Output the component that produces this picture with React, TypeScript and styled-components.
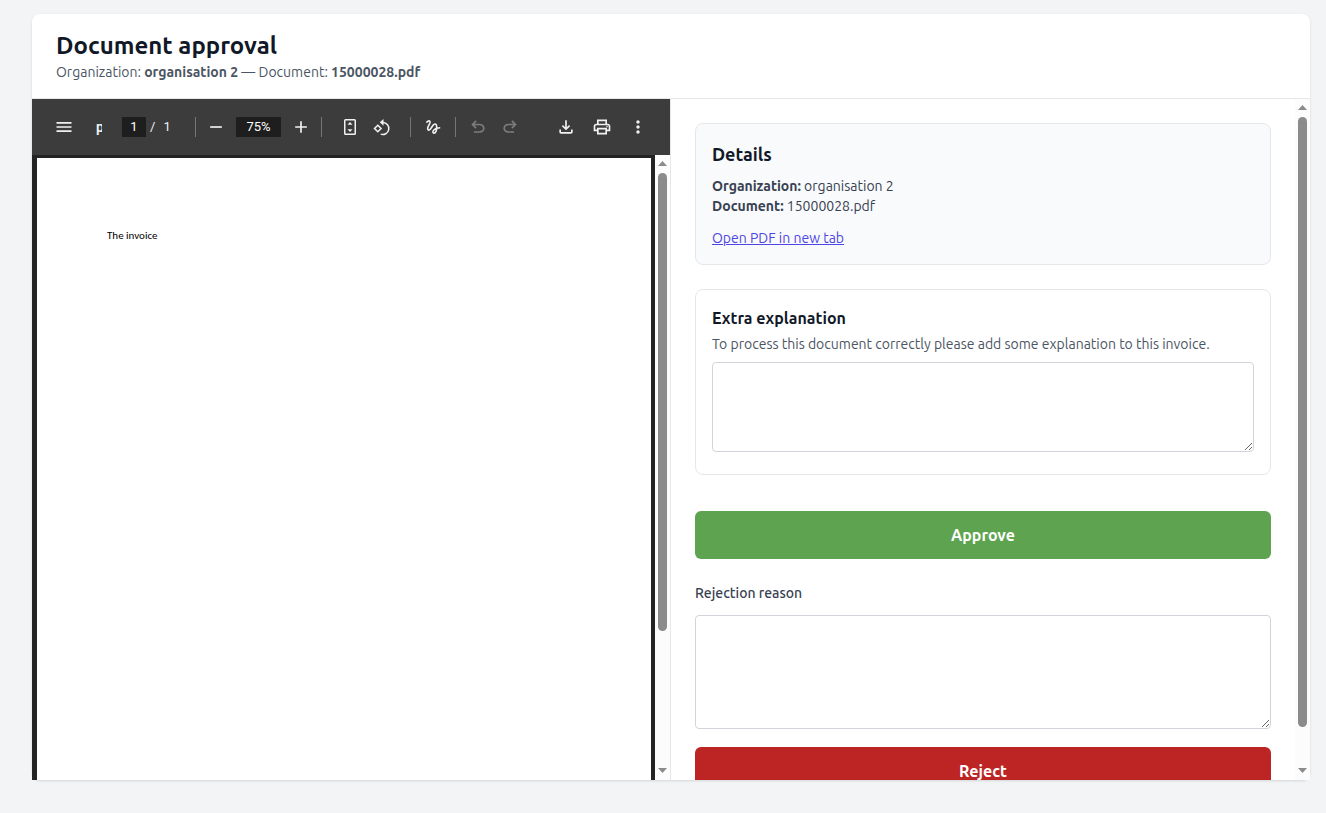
import React from 'react';
import styled, { createGlobalStyle, css } from 'styled-components';
import {
  MdAdd,
  MdMenu,
  MdMoreVert,
  MdOutlineFileDownload,
  MdOutlineLocalPrintshop,
  MdRemove,
} from 'react-icons/md';

const GlobalStyle = createGlobalStyle`
  *, *::before, *::after { box-sizing: border-box; }
  body {
    margin: 0;
    background: #f3f4f6;
    color: #111827;
    font-family: Ubuntu, "Noto Sans", sans-serif;
    font-size: 14px;
    line-height: 20px;
  }
  h1, h2, h3, p { margin: 0; }
`;

const Page = styled.div`
  display: flex;
  height: 100vh;
  padding: 14px 16px 33px 32px;
`;

const Card = styled.main`
  flex: 1;
  min-width: 0;
  display: flex;
  flex-direction: column;
  background: #fff;
  border-radius: 8px;
  box-shadow: 0 1px 3px rgba(0, 0, 0, 0.1), 0 1px 2px -1px rgba(0, 0, 0, 0.1);
`;

const Header = styled.header`
  padding: 16px 24px;
  border-bottom: 1px solid #e5e7eb;
`;

const Title = styled.h1`
  font-size: 24px;
  line-height: 32px;
  font-weight: 700;
`;

const Subtitle = styled.p`
  color: #4b5563;
  strong { font-weight: 700; }
`;

const Columns = styled.div`
  flex: 1;
  min-height: 0;
  display: grid;
  grid-template-columns: 1fr 1fr;
`;

const Viewer = styled.section`
  display: flex;
  flex-direction: column;
  min-width: 0;
  min-height: 0;
  border-right: 1px solid #e5e7eb;
  font-family: Roboto, sans-serif;
`;

const Toolbar = styled.div`
  display: flex;
  align-items: center;
  flex: none;
  height: 56px;
  padding: 0 16px;
  background: #3c3c3c;
  color: #f1f1f1;
`;

const ToolGroup = styled.div<{ $gap?: number; $push?: boolean }>`
  display: flex;
  align-items: center;
  gap: ${(p) => p.$gap ?? 0}px;
  ${(p) => p.$push && css`margin-left: auto;`}
`;

const ToolButton = styled.button`
  display: flex;
  align-items: center;
  justify-content: center;
  width: 32px;
  height: 32px;
  padding: 0;
  border: 0;
  border-radius: 50%;
  background: none;
  color: #f1f1f1;
  svg { width: 20px; height: 20px; fill: currentColor; }
  &:disabled { color: #7c7c7c; }
`;

const Divider = styled.span<{ $before: number; $after: number }>`
  width: 1px;
  height: 20px;
  margin: 0 ${(p) => p.$after}px 0 ${(p) => p.$before}px;
  background: #767676;
`;

const FileName = styled.span`
  width: 6px;
  margin: 0 20px 0 16px;
  overflow: hidden;
  white-space: nowrap;
  font-weight: 600;
`;

const ToolInput = styled.input<{ $width: number }>`
  width: ${(p) => p.$width}px;
  height: 20px;
  padding: 0;
  border: 0;
  background: #1e1e1e;
  color: #fff;
  font: 13px/20px Roboto, sans-serif;
  text-align: center;
`;

const PageTotal = styled.span`
  display: flex;
  gap: 8px;
  width: 21px;
  margin-left: 4px;
  font-size: 13px;
`;

const Scroller = styled.div`
  flex: 1;
  min-height: 0;
  display: flex;
`;

const Canvas = styled.div`
  flex: 1;
  min-width: 0;
  display: flex;
  padding: 3px 4px 0 5px;
  background: #232323;
`;

const Sheet = styled.div`
  flex: 1;
  padding: 70px;
  background: #fff;
  color: #000;
  font-family: Carlito, Lato, sans-serif;
  font-size: 11px;
  line-height: 16px;
`;

const Track = styled.div`
  flex: none;
  width: 15px;
  display: flex;
  flex-direction: column;
  align-items: center;
  background: #fcfcfc;
`;

const TrackBody = styled.div`
  flex: 1;
  width: 9px;
`;

const Thumb = styled.div<{ $size: number }>`
  height: ${(p) => p.$size}%;
  border-radius: 5px;
  background: #8b8b8b;
`;

const Arrow = styled.svg`
  flex: none;
  width: 9px;
  height: 18px;
  fill: #8b8b8b;
`;

const Pane = styled.section`
  flex: 1;
  min-width: 0;
  padding: 24px;
  overflow: hidden;
`;

const Panel = styled.section<{ $tinted?: boolean }>`
  margin-bottom: 24px;
  padding: 16px;
  border: 1px solid #e5e7eb;
  border-radius: 8px;
  background: ${(p) => (p.$tinted ? '#f9fafb' : '#fff')};
`;

const PanelTitle = styled.h2`
  margin-bottom: 8px;
  font-size: 18px;
  line-height: 28px;
  font-weight: 700;
`;

const PanelSubtitle = styled.h3`
  margin-bottom: 4px;
  font-size: 16px;
  line-height: 24px;
  font-weight: 700;
`;

const Line = styled.p`
  color: #374151;
  strong { font-weight: 700; }
`;

const PdfLink = styled.a`
  display: inline-block;
  margin-top: 12px;
  color: #4f46e5;
  text-decoration: underline;
`;

const Hint = styled.label`
  display: block;
  margin-bottom: 8px;
  color: #4b5563;
`;

const TextArea = styled.textarea<{ $height: number }>`
  display: block;
  width: 100%;
  height: ${(p) => p.$height}px;
  margin-bottom: 6px;
  padding: 8px;
  border: 1px solid #d1d5db;
  border-radius: 4px;
  background: #fff;
  font: inherit;
  resize: vertical;
`;

const FieldLabel = styled.label`
  display: block;
  margin: 24px 0 12px;
  color: #374151;
  font-weight: 500;
`;

const ActionButton = styled.button<{ $tone: 'approve' | 'reject' }>`
  display: block;
  width: 100%;
  height: 48px;
  margin-top: ${(p) => (p.$tone === 'approve' ? 36 : 18)}px;
  padding: 0;
  border: 0;
  border-radius: 6px;
  background: ${(p) => (p.$tone === 'approve' ? '#5ea34f' : '#bd2424')};
  color: #fff;
  font-family: inherit;
  font-size: 16px;
  line-height: 24px;
  font-weight: 700;
`;

const UndoIcon = ({ flip }: { flip?: boolean }) => (
  <svg viewBox="0 -960 960 960" aria-hidden="true">
    <path
      transform={flip ? 'translate(960 0) scale(-1 1)' : undefined}
      d="M280-200v-80h284q63 0 109.500-40T720-420q0-60-46.500-100T564-560H312l104 104-56 56-200-200 200-200 56 56-104 104h252q97 0 166.500 63T800-420q0 94-69.500 157T564-200H280Z"
    />
  </svg>
);

const FitPageIcon = () => (
  <svg viewBox="0 0 20 20" aria-hidden="true">
    <path
      fillRule="evenodd"
      d="M5.500 2h9A1.500 1.500 0 0 1 16 3.500v13a1.500 1.500 0 0 1-1.500 1.500h-9A1.500 1.500 0 0 1 4 16.500v-13A1.500 1.500 0 0 1 5.500 2zm0 1.500v13h9v-13zM10 5l2.500 2.700h-5zM10 15l2.500-2.700h-5z"
    />
  </svg>
);

const RotateIcon = () => (
  <svg viewBox="0 0 20 20" aria-hidden="true">
    <g fill="none" stroke="currentColor" strokeWidth="1.500">
      <path d="M5.800 8.200 9.100 11.500 5.800 14.800 2.500 11.500z" />
      <path d="M11 5.500a6 6 0 1 1-2.300 11.600" />
    </g>
    <path d="M7.800 5.300 11.500 1.900v6.800z" />
  </svg>
);

const DrawIcon = () => (
  <svg viewBox="0 0 20 20" aria-hidden="true">
    <path
      fill="none"
      stroke="currentColor"
      strokeWidth="1.600"
      d="M3.400 5.600C4.600 4.300 5.700 3.400 6.700 4.100c1.200.9-.2 2.900-1.200 4.700-1 1.800-1.300 4.100.2 4.300 1.800.2 2.900-3 4.300-4.900 1.200-1.600 3.100-1.700 3.500.1.400 2.200.2 4.600-.5 6-.6 1.300-1.500 2-2.300 1.800-1.200-.3-1-1.900.1-3.100 1.500-1.600 3.300-2.200 6.400-2.200"
    />
  </svg>
);

const ScrollTrack = ({ size }: { size: number }) => (
  <Track aria-hidden="true">
    <Arrow viewBox="0 0 9 18"><path d="M4.500 6 9 11H0z" /></Arrow>
    <TrackBody><Thumb $size={size} /></TrackBody>
    <Arrow viewBox="0 0 9 18"><path d="M4.500 11 0 6h9z" /></Arrow>
  </Track>
);

const PdfToolbar = () => (
  <Toolbar>
    <ToolButton aria-label="Menu"><MdMenu /></ToolButton>
    <FileName>pdf</FileName>
    <ToolInput $width={24} defaultValue="1" aria-label="Page number" />
    <PageTotal><span>/</span><span>1</span></PageTotal>
    <Divider $before={24} $after={4} />
    <ToolGroup $gap={4}>
      <ToolButton aria-label="Zoom out"><MdRemove /></ToolButton>
      <ToolInput $width={45} defaultValue="75%" aria-label="Zoom level" />
      <ToolButton aria-label="Zoom in"><MdAdd /></ToolButton>
    </ToolGroup>
    <Divider $before={4} $after={12} />
    <ToolGroup>
      <ToolButton aria-label="Fit to page"><FitPageIcon /></ToolButton>
      <ToolButton aria-label="Rotate counterclockwise"><RotateIcon /></ToolButton>
    </ToolGroup>
    <Divider $before={12} $after={6} />
    <ToolButton aria-label="Draw"><DrawIcon /></ToolButton>
    <Divider $before={6} $after={6} />
    <ToolGroup>
      <ToolButton aria-label="Undo" disabled><UndoIcon /></ToolButton>
      <ToolButton aria-label="Redo" disabled><UndoIcon flip /></ToolButton>
    </ToolGroup>
    <ToolGroup $gap={4} $push>
      <ToolButton aria-label="Download"><MdOutlineFileDownload /></ToolButton>
      <ToolButton aria-label="Print"><MdOutlineLocalPrintshop /></ToolButton>
      <ToolButton aria-label="More actions"><MdMoreVert /></ToolButton>
    </ToolGroup>
  </Toolbar>
);

export default function App() {
  return (
    <>
      <GlobalStyle />
      <Page>
        <Card>
          <Header>
            <Title>Document approval</Title>
            <Subtitle>
              Organization: <strong>organisation 2</strong> — Document: <strong>15000028.pdf</strong>
            </Subtitle>
          </Header>
          <Columns>
            <Viewer>
              <PdfToolbar />
              <Scroller>
                <Canvas><Sheet>The invoice</Sheet></Canvas>
                <ScrollTrack size={77.8} />
              </Scroller>
            </Viewer>
            <Scroller>
              <Pane>
                <Panel $tinted>
                  <PanelTitle>Details</PanelTitle>
                  <Line><strong>Organization:</strong> organisation 2</Line>
                  <Line><strong>Document:</strong> 15000028.pdf</Line>
                  <PdfLink href="#pdf">Open PDF in new tab</PdfLink>
                </Panel>
                <Panel>
                  <PanelSubtitle>Extra explanation</PanelSubtitle>
                  <Hint htmlFor="explanation">
                    To process this document correctly please add some explanation to this invoice.
                  </Hint>
                  <TextArea id="explanation" $height={90} />
                </Panel>
                <ActionButton $tone="approve">Approve</ActionButton>
                <FieldLabel htmlFor="reason">Rejection reason</FieldLabel>
                <TextArea id="reason" $height={114} />
                <ActionButton $tone="reject">Reject</ActionButton>
              </Pane>
              <ScrollTrack size={94.5} />
            </Scroller>
          </Columns>
        </Card>
      </Page>
    </>
  );
}
